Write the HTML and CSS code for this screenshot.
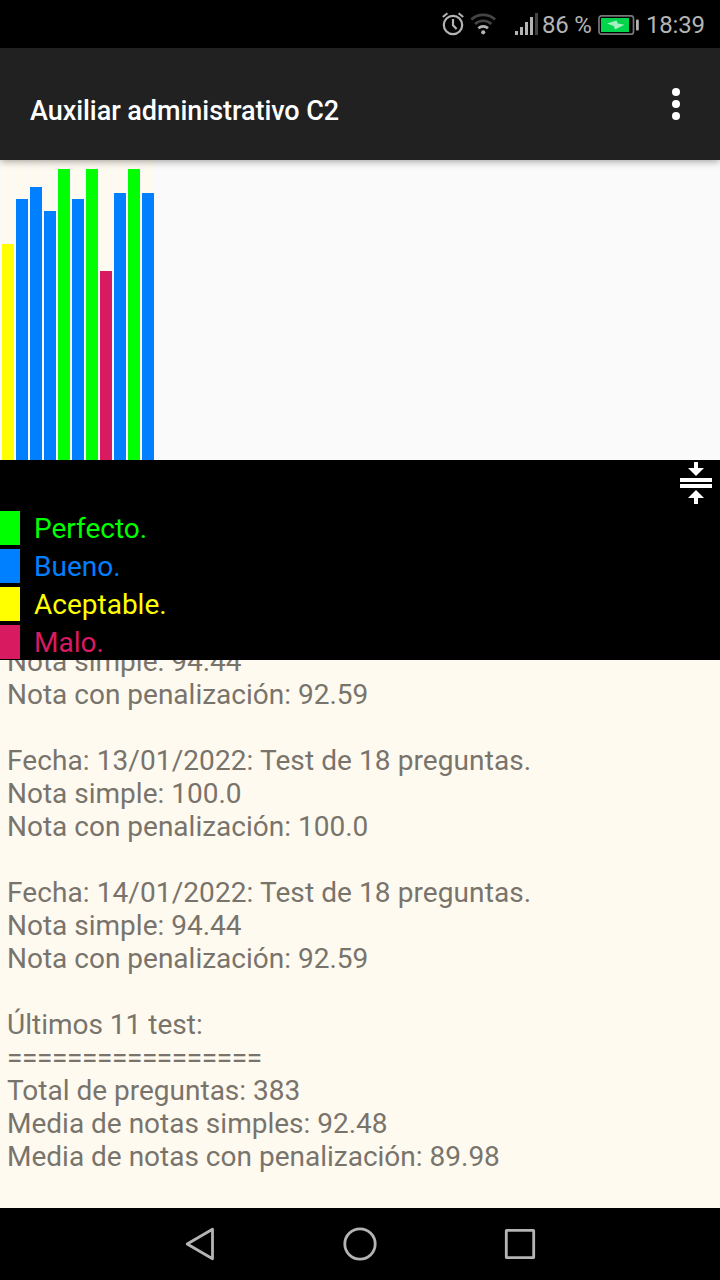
FILE: index.html
```html
<!DOCTYPE html>
<html lang="es">
<head>
    <meta charset="UTF-8">
    <meta name="viewport" content="width=device-width, initial-scale=1.0">
    <title>Auxiliar administrativo C2</title>
    <link rel="stylesheet" href="styles.css">
</head>
<body>
    <div class="status-bar">
        <svg class="status-icons" width="110" height="48" viewBox="430 0 110 48">
            <!-- alarma -->
            <g fill="none" stroke="#b4b4b4" stroke-width="2.2">
                <circle cx="453" cy="25" r="9.2"/>
                <path d="M453 19v6.2l3.6 3.8"/>
                <path d="M442.8 17l4.6-3.8M463.2 17l-4.6-3.8" stroke-width="2"/>
            </g>
            <!-- wifi -->
            <g fill="none" stroke-width="2.6">
                <path d="M471.3 19.5a17.5 17.5 0 0 1 23.8 0" stroke="#444"/>
                <path d="M475 24a12 12 0 0 1 16.4 0" stroke="#444"/>
                <path d="M478.4 28.2a7.2 7.2 0 0 1 9.6 0" stroke="#b4b4b4"/>
            </g>
            <circle cx="483.2" cy="32.3" r="2.1" fill="#b4b4b4"/>
            <!-- cobertura -->
            <g fill="#b4b4b4">
                <rect x="515" y="31" width="3" height="4"/>
                <rect x="520" y="27" width="3" height="8"/>
                <rect x="525" y="22" width="3" height="13"/>
                <rect x="530" y="17" width="3" height="18"/>
                <rect x="535" y="13" width="3" height="22" fill="#444"/>
            </g>
        </svg>
        <span class="battery-level">86 %</span>
        <svg class="battery" width="42" height="22" viewBox="0 0 42 22">
            <rect x="1" y="1.8" width="34.5" height="18.4" rx="2.5" fill="none" stroke="#777" stroke-width="1.7"/>
            <rect x="3" y="4" width="28" height="14" fill="#00d54c"/>
            <path d="M9 9.5l9.5-3 1.3 3 6.7 1.2-9.5 4.8-1.3-3.4z" fill="#a5f0bf"/>
            <rect x="38" y="5.5" width="2.8" height="11" rx="1" fill="#b4b4b4"/>
        </svg>
        <span class="clock">18:39</span>
    </div>

    <div class="app-bar">
        <h1 class="app-title">Auxiliar administrativo C2</h1>
        <button class="menu-button" aria-label="Más opciones">
            <span></span>
            <span></span>
            <span></span>
        </button>
    </div>

    <div class="chart">
        <div class="column"><div class="bar aceptable" style="height: 216px"></div></div>
        <div class="column"><div class="bar bueno" style="height: 261px"></div></div>
        <div class="column"><div class="bar bueno" style="height: 273px"></div></div>
        <div class="column"><div class="bar bueno" style="height: 249px"></div></div>
        <div class="column"><div class="bar perfecto" style="height: 291px"></div></div>
        <div class="column"><div class="bar bueno" style="height: 261px"></div></div>
        <div class="column"><div class="bar perfecto" style="height: 291px"></div></div>
        <div class="column"><div class="bar malo" style="height: 189px"></div></div>
        <div class="column"><div class="bar bueno" style="height: 267px"></div></div>
        <div class="column"><div class="bar perfecto" style="height: 291px"></div></div>
        <div class="column"><div class="bar bueno" style="height: 267px"></div></div>
    </div>

    <div class="legend">
        <ul class="legend-list">
            <li class="legend-item text-perfecto"><span class="swatch perfecto"></span>Perfecto.</li>
            <li class="legend-item text-bueno"><span class="swatch bueno"></span>Bueno.</li>
            <li class="legend-item text-aceptable"><span class="swatch aceptable"></span>Aceptable.</li>
            <li class="legend-item text-malo"><span class="swatch malo"></span>Malo.</li>
        </ul>
        <svg class="collapse-icon" width="32" height="42" viewBox="0 0 32 42" fill="#fff">
            <path d="M14 0h4v6h6l-8 8-8-8h6z"/>
            <path d="M0 16h32v4H0zM0 22h32v4H0z"/>
            <path d="M14 42h4v-6h6l-8-8-8 8h6z"/>
        </svg>
    </div>

    <div class="report">
        <p>Nota simple: 94.44</p>
        <p>Nota con penalización: 92.59</p>

        <p class="test-date">Fecha: 13/01/2022: Test de 18 preguntas.</p>
        <p>Nota simple: 100.0</p>
        <p>Nota con penalización: 100.0</p>

        <p class="test-date">Fecha: 14/01/2022: Test de 18 preguntas.</p>
        <p>Nota simple: 94.44</p>
        <p>Nota con penalización: 92.59</p>

        <p class="summary-title">Últimos 11 test:</p>
        <p class="rule">=================</p>
        <p>Total de preguntas: 383</p>
        <p>Media de notas simples: 92.48</p>
        <p>Media de notas con penalización: 89.98</p>
    </div>

    <div class="nav-bar">
        <svg width="32" height="36" viewBox="0 0 32 36">
            <path d="M3.2 18L28.5 3.2v29.6z"/>
        </svg>
        <svg width="36" height="36" viewBox="0 0 36 36">
            <circle cx="18" cy="18" r="15.2"/>
        </svg>
        <svg width="32" height="36" viewBox="0 0 32 36">
            <rect x="2.3" y="4.3" width="27.4" height="27.4" rx="0.5"/>
        </svg>
    </div>
</body>
</html>
```
FILE: styles.css
```css
* {
    box-sizing: border-box;
    margin: 0;
    padding: 0;
}

:root {
    --perfecto: #00ff00;
    --bueno: #0080ff;
    --aceptable: #ffff00;
    --malo: #d81b60;
    --cream: #fffaf0;
}

body {
    display: flex;
    flex-direction: column;
    width: 720px;
    height: 1280px;
    overflow: hidden;
    font-family: Roboto, sans-serif;
    font-size: 28px;
    line-height: 33px;
    background: #fafafa;
}

.status-bar {
    display: flex;
    align-items: center;
    flex: 0 0 48px;
    padding-left: 430px;
    background: #000;
    color: #b4b4b4;
    font-size: 24px;
    letter-spacing: -0.2px;
    white-space: nowrap;
}

.battery-level {
    width: 50px;
    margin-left: 2px;
    margin-top: 2px;
}

.battery {
    margin: 2px 6px 0 6px;
}

.clock {
    margin-top: 2px;
}

.app-bar {
    display: flex;
    align-items: center;
    justify-content: space-between;
    flex: 0 0 112px;
    padding: 0 40px 0 30px;
    background: #212121;
    color: #fff;
    box-shadow: 0 1px 8px rgba(0, 0, 0, 0.4);
    z-index: 1;
}

.app-title {
    padding-top: 15px;
    font-size: 27px;
    font-weight: 500;
    letter-spacing: -0.05px;
}

.menu-button {
    display: flex;
    flex-direction: column;
    gap: 4px;
    border: none;
    background: none;
}

.menu-button span {
    width: 8px;
    height: 8px;
    border-radius: 50%;
    background: #fff;
}

.chart {
    display: flex;
    gap: 2px;
    flex: 0 0 300px;
    padding-left: 2px;
}

.column {
    display: flex;
    align-items: flex-end;
    width: 12px;
    background: var(--cream);
}

.bar {
    width: 100%;
}

.perfecto {
    background: var(--perfecto);
}

.bueno {
    background: var(--bueno);
}

.aceptable {
    background: var(--aceptable);
}

.malo {
    background: var(--malo);
}

.legend {
    display: flex;
    justify-content: space-between;
    flex: 0 0 200px;
    padding-right: 8px;
    background: #000;
}

.legend-list {
    display: flex;
    flex-direction: column;
    gap: 4px;
    padding-top: 51px;
    list-style: none;
}

.legend-item {
    display: flex;
    align-items: center;
    gap: 14px;
    height: 34px;
}

.swatch {
    width: 20px;
    height: 34px;
}

.text-perfecto {
    color: var(--perfecto);
}

.text-bueno {
    color: var(--bueno);
}

.text-aceptable {
    color: var(--aceptable);
}

.text-malo {
    color: var(--malo);
}

.collapse-icon {
    margin-top: 2px;
}

/* el texto queda desplazado hasta el final */
.report {
    display: flex;
    flex-direction: column;
    justify-content: flex-end;
    flex: 1;
    min-height: 0;
    padding: 0 7px 35px;
    overflow: hidden;
    background: var(--cream);
    color: #78746c;
}

.report p {
    flex-shrink: 0;
}

.report .test-date {
    margin-top: 33px;
    letter-spacing: 0.09px;
}

.report .summary-title {
    margin-top: 33px;
}

.report .rule {
    letter-spacing: -0.38px;
}

.nav-bar {
    display: flex;
    align-items: center;
    justify-content: center;
    gap: 126px;
    flex: 0 0 72px;
    background: #000;
}

.nav-bar svg {
    fill: none;
    stroke: #b4b4b4;
    stroke-width: 2.8;
    stroke-linejoin: round;
}
```
